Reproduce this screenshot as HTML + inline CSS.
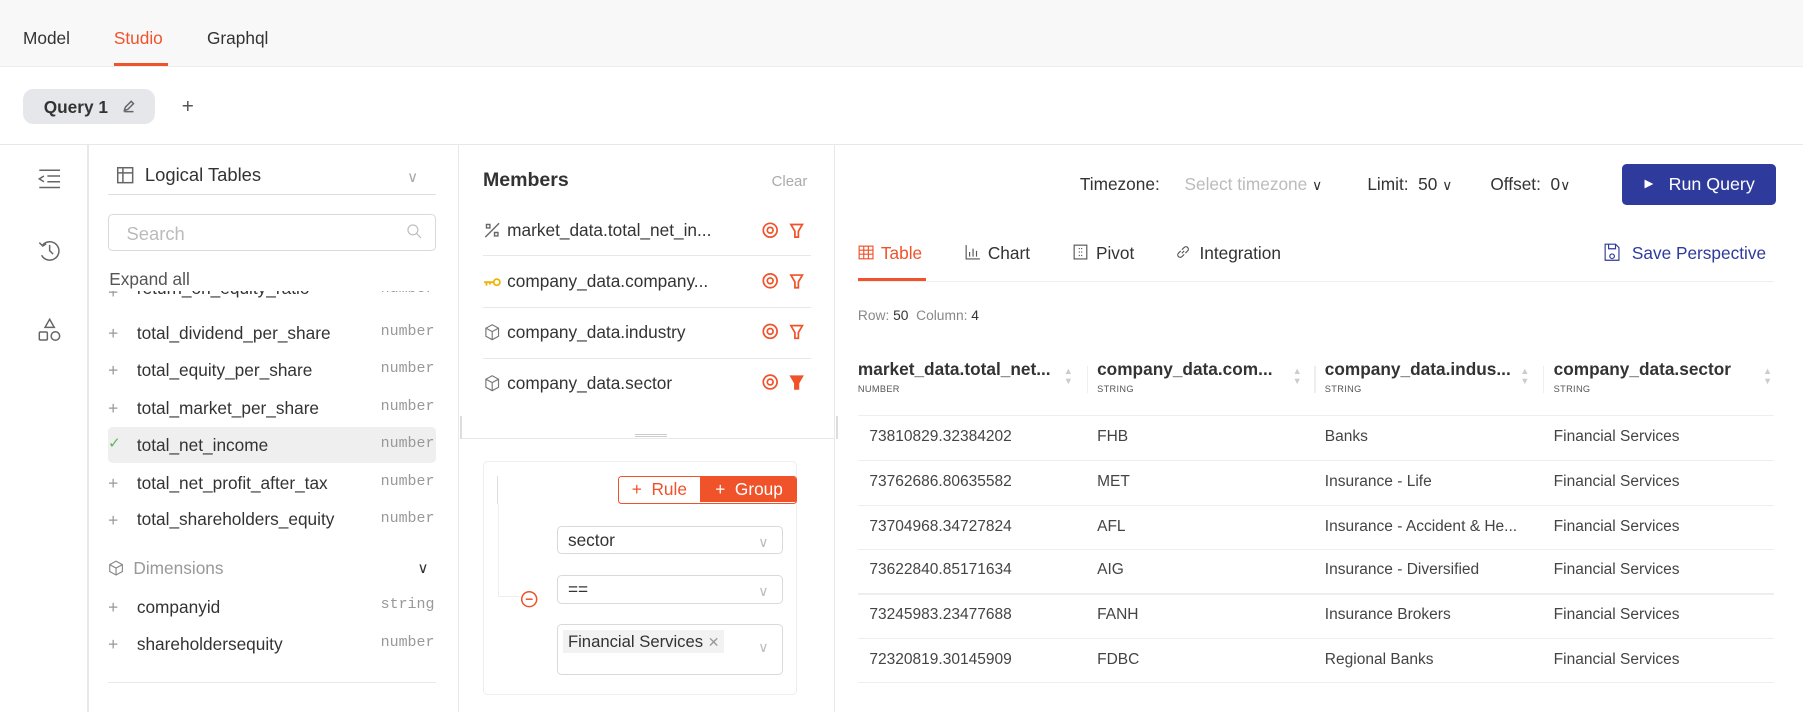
<!DOCTYPE html>
<html><head><meta charset="utf-8"><style>
*{box-sizing:border-box;margin:0;padding:0}
html,body{width:1803px;height:712px;overflow:hidden;background:#fff}
#w{zoom:1.15;width:1568px;height:620px;position:relative;font-family:"Liberation Sans",sans-serif;color:#333;font-size:15px}
.a{position:absolute;white-space:nowrap}
.ln{position:absolute;background:#e8e8e8}
.mono{font-family:"Liberation Mono",monospace;font-size:13px;color:#999}
.ic{stroke:#666;fill:none;stroke-width:1.3}
.sel{position:absolute;border:1px solid #d9d9d9;border-radius:4px;background:#fff}
.chev{position:absolute;right:12px;top:7px;color:#bbb;font-size:12px}
.th{font-weight:bold;font-size:15px;color:#333}
.st{font-size:8px;color:#555;letter-spacing:.3px}
.td{font-size:13.5px;color:#444}
.pl{position:absolute;color:#999;font-size:15px;line-height:1}
</style></head><body><div id="w">
<div class="a" style="left:0;top:0;width:1568px;height:58px;background:#f8f8f9;border-bottom:1px solid #ececec"></div>
<div class="a" style="left:20px;top:24px">Model</div>
<div class="a" style="left:99px;top:24px;color:#f0522a">Studio</div>
<div class="a" style="left:99px;top:55px;width:47px;height:2px;background:#f0522a"></div>
<div class="a" style="left:180px;top:24px">Graphql</div>
<div class="a" style="left:20px;top:77px;width:115px;height:31px;background:#e5e7eb;border-radius:9px"></div>
<div class="a" style="left:38px;top:84px;font-weight:bold;color:#333">Query 1</div>
<svg class="a" style="left:106px;top:86px" width="12" height="12"><path d="M2 10l1-3 5-5 2 2-5 5z M2 11h8" class="ic" stroke-width="1"/></svg>
<div class="a" style="left:158px;top:83px;font-size:18px;color:#555">+</div>
<div class="ln" style="left:0;top:125px;width:1568px;height:1px"></div>
<div class="ln" style="left:76px;top:126px;width:1px;height:494px"></div>
<svg class="a" style="left:32px;top:146px" width="22" height="20"><path d="M2 2h18M9 7h11M9 12h11M2 17h18M6 7l-4 2.5 4 2.5" class="ic"/></svg>
<svg class="a" style="left:32px;top:207px" width="22" height="22"><path d="M5 6a8 8 0 1 1 -1 9M2 4l3 3 3-2M11 6v5l3 3" class="ic"/></svg>
<svg class="a" style="left:32px;top:276px" width="22" height="22"><path d="M11 2l4 7h-8z" class="ic"/><rect x="2" y="13" width="7" height="7" rx="1" class="ic"/><circle cx="16" cy="16.5" r="3.7" class="ic"/></svg>
<svg class="a" style="left:101px;top:144px" width="16" height="16"><rect x="1.5" y="1.5" width="13" height="13" class="ic"/><path d="M1.5 6h13M6 1.5v13" class="ic"/></svg>
<div class="a" style="left:126px;top:143px;font-size:16px">Logical Tables</div>
<div class="a" style="left:354px;top:146px;color:#aaa;font-size:13px">∨</div>
<div class="ln" style="left:94px;top:169px;width:285px;height:1px;background:#ddd"></div>
<div class="a" style="left:94px;top:186px;width:285px;height:32px;border:1px solid #d9d9d9;border-radius:4px"></div>
<div class="a" style="left:110px;top:194px;color:#bbb;font-size:16px">Search</div>
<svg class="a" style="left:353px;top:194px" width="14" height="14"><circle cx="6" cy="6" r="4.3" stroke="#bbb" fill="none"/><path d="M9 9l4 4" stroke="#bbb"/></svg>
<div class="a" style="left:95px;top:234px;color:#555">Expand all</div>
<div style="position:absolute;left:94px;top:253px;width:285px;height:12px;overflow:hidden">
<div class="pl" style="left:0;top:-6px">+</div><div class="a" style="left:25px;top:-11px">return_on_equity_ratio</div><div class="a mono" style="left:237px;top:-9px">number</div></div>
<div class="a" style="left:94px;top:371px;width:285px;height:32px;background:#efefef;border-radius:4px"></div>
<div class="pl" style="left:94px;top:283px">+</div>
<div class="pl" style="left:94px;top:315px">+</div>
<div class="pl" style="left:94px;top:348px">+</div>
<div class="a" style="left:94px;top:380px;color:#5cb85c;font-size:13px;line-height:1">✓</div>
<div class="pl" style="left:94px;top:413px">+</div>
<div class="pl" style="left:94px;top:445px">+</div>
<div class="a" style="left:119px;top:281px">total_dividend_per_share</div>
<div class="a" style="left:119px;top:313px">total_equity_per_share</div>
<div class="a" style="left:119px;top:346px">total_market_per_share</div>
<div class="a" style="left:119px;top:378px">total_net_income</div>
<div class="a" style="left:119px;top:411px">total_net_profit_after_tax</div>
<div class="a" style="left:119px;top:443px">total_shareholders_equity</div>
<div class="a mono" style="left:331px;top:282px">number</div>
<div class="a mono" style="left:331px;top:314px">number</div>
<div class="a mono" style="left:331px;top:347px">number</div>
<div class="a mono" style="left:331px;top:379px">number</div>
<div class="a mono" style="left:331px;top:412px">number</div>
<div class="a mono" style="left:331px;top:444px">number</div>
<svg class="a" style="left:94px;top:487px" width="14" height="14"><path d="M7 1l5.5 3v6L7 13 1.5 10V4z M1.5 4L7 7l5.5-3M7 7v6" stroke="#888" fill="none"/></svg>
<div class="a" style="left:116px;top:485px;color:#999">Dimensions</div>
<div class="a" style="left:363px;top:486px;font-size:13px;color:#333">∨</div>
<div class="pl" style="left:94px;top:521px">+</div>
<div class="pl" style="left:94px;top:553px">+</div>
<div class="a" style="left:119px;top:519px">companyid</div>
<div class="a" style="left:119px;top:551px">shareholdersequity</div>
<div class="a mono" style="left:331px;top:519px">string</div>
<div class="a mono" style="left:331px;top:552px">number</div>
<div class="ln" style="left:94px;top:593px;width:285px;height:1px"></div>
<div class="ln" style="left:398px;top:126px;width:1px;height:494px"></div>
<div class="a" style="left:420px;top:147px;font-size:17px;font-weight:bold;color:#333">Members</div>
<div class="a" style="left:671px;top:150px;font-size:13px;color:#aaa">Clear</div>
<svg class="a" style="left:420px;top:192px" width="16" height="16"><path d="M2 14L14 2M3 3h3v3H3zM10 10h3v3h-3z" stroke="#666" fill="none" stroke-width="1.2"/></svg>
<svg class="a" style="left:420px;top:237px" width="16" height="16"><path d="M1 8h8M3 8v3M6 8v2" stroke="#f0b400" stroke-width="1.6" fill="none"/><circle cx="12" cy="8" r="2.7" stroke="#f0b400" stroke-width="1.5" fill="none"/></svg>
<svg class="a" style="left:420px;top:281px" width="16" height="16"><path d="M8 1.5l5.5 3v7L8 14.5 2.5 11.5v-7z M2.5 4.5L8 7.5l5.5-3M8 7.5v7" stroke="#777" fill="none"/></svg>
<svg class="a" style="left:420px;top:325px" width="16" height="16"><path d="M8 1.5l5.5 3v7L8 14.5 2.5 11.5v-7z M2.5 4.5L8 7.5l5.5-3M8 7.5v7" stroke="#777" fill="none"/></svg>
<div class="a" style="left:441px;top:191px">market_data.total_net_in...</div>
<div class="a" style="left:441px;top:236px">company_data.company...</div>
<div class="a" style="left:441px;top:280px">company_data.industry</div>
<div class="a" style="left:441px;top:324px">company_data.sector</div>
<div class="ln" style="left:420px;top:222px;width:285px;height:1px"></div>
<div class="ln" style="left:420px;top:267px;width:285px;height:1px"></div>
<div class="ln" style="left:420px;top:311px;width:285px;height:1px"></div>
<svg class="a" style="left:662px;top:192px" width="45" height="160">
<g stroke="#f0522a" fill="none" stroke-width="1.5">
<circle cx="8" cy="8" r="6"/><circle cx="8" cy="8" r="2.5"/>
<circle cx="8" cy="52" r="6"/><circle cx="8" cy="52" r="2.5"/>
<circle cx="8" cy="96" r="6"/><circle cx="8" cy="96" r="2.5"/>
<circle cx="8" cy="140" r="6"/><circle cx="8" cy="140" r="2.5"/>
<path d="M26 3h10l-3.5 6v5h-3V9z"/><path d="M26 47h10l-3.5 6v5h-3V53z"/><path d="M26 91h10l-3.5 6v5h-3V97z"/>
<path d="M26 135h10l-3.5 6v5h-3v-5z" fill="#f0522a"/></g></svg>
<div class="a" style="left:400px;top:362px;width:2px;height:20px;background:#ddd"></div>
<div class="a" style="left:727px;top:362px;width:2px;height:20px;background:#ddd"></div>
<div class="ln" style="left:402px;top:381px;width:323px;height:1px"></div>
<div class="a" style="left:552px;top:377px;width:28px;height:3px;border-top:1px solid #ccc;border-bottom:1px solid #ccc"></div>
<div class="a" style="left:420px;top:401px;width:273px;height:203px;border:1px solid #eee;border-radius:4px"></div>
<div class="a" style="left:432px;top:414px;width:1px;height:24px;background:#ddd"></div>
<div class="a" style="left:433px;top:438px;width:1px;height:80px;background:#eee"></div>
<div class="a" style="left:433px;top:518px;width:18px;height:1px;background:#eee"></div>
<div class="a" style="left:537px;top:414px;width:156px;height:24px;border:1px solid #f0522a;border-radius:3px;overflow:hidden">
<div class="a" style="left:0;top:0;width:71px;height:22px;background:#fff;color:#f0522a;text-align:center;line-height:22px">+&nbsp; Rule</div>
<div class="a" style="left:71px;top:0;width:85px;height:22px;background:#f0522a;color:#fff;text-align:center;line-height:22px">+&nbsp; Group</div></div>
<div class="sel" style="left:484px;top:457px;width:197px;height:25px"><div class="a" style="left:9px;top:3px">sector</div><div class="chev">∨</div></div>
<div class="sel" style="left:484px;top:500px;width:197px;height:25px"><div class="a" style="left:9px;top:3px">==</div><div class="chev">∨</div></div>
<div class="sel" style="left:484px;top:543px;width:197px;height:44px"><div class="a" style="left:5px;top:4px;height:20px;background:#f2f2f2;padding:0 4px;line-height:20px;font-size:14.5px">Financial Services <span style="color:#999;font-size:12px">✕</span></div><div class="chev" style="top:13px">∨</div></div>
<svg class="a" style="left:452px;top:513px" width="16" height="16"><circle cx="8" cy="8" r="6.5" stroke="#f0522a" fill="none" stroke-width="1.3"/><path d="M5 8h6" stroke="#f0522a" stroke-width="1.3"/></svg>
<div class="ln" style="left:725px;top:126px;width:1px;height:494px"></div>
<div class="a" style="left:939px;top:151px">Timezone:</div>
<div class="a" style="left:1030px;top:151px;color:#bbb">Select timezone <span style="color:#333;font-size:12px">∨</span></div>
<div class="a" style="left:1189px;top:151px">Limit:&nbsp; 50 <span style="font-size:12px">∨</span></div>
<div class="a" style="left:1296px;top:151px">Offset:&nbsp; 0<span style="font-size:12px">∨</span></div>
<div class="a" style="left:1410px;top:143px;width:134px;height:35px;background:#2e3a9c;border-radius:4px;color:#fff;line-height:35px;font-size:15.5px"><span style="position:absolute;left:20px;font-size:10px">▶</span><span style="position:absolute;left:41px">Run Query</span></div>
<svg class="a" style="left:746px;top:213px" width="14" height="13"><rect x="1" y="1" width="12" height="11" stroke="#f0522a" fill="none"/><path d="M1 4.5h12M1 8h12M5 1v11M9 1v11" stroke="#f0522a"/></svg>
<div class="a" style="left:766px;top:211px;color:#f0522a">Table</div>
<div class="a" style="left:746px;top:242px;width:59px;height:2px;background:#f0522a"></div>
<svg class="a" style="left:839px;top:212px" width="14" height="14"><path d="M1 1v12h12M4 11V7M7 11V4M10 11V6" stroke="#555" fill="none"/></svg>
<div class="a" style="left:859px;top:211px">Chart</div>
<svg class="a" style="left:933px;top:212px" width="13" height="14"><rect x="1" y="1" width="11" height="12" stroke="#555" fill="none"/><path d="M5 4h1M7 4h1M5 7h1M7 7h1M5 10h1M7 10h1" stroke="#555"/></svg>
<div class="a" style="left:953px;top:211px">Pivot</div>
<svg class="a" style="left:1022px;top:212px" width="14" height="14"><path d="M6 8l2-2M5 6l-2 2a2 2 0 0 0 3 3l2-2M9 8l2-2a2 2 0 0 0-3-3L6 5" stroke="#555" fill="none"/></svg>
<div class="a" style="left:1043px;top:211px">Integration</div>
<svg class="a" style="left:1395px;top:211px" width="14" height="16"><path d="M1 1h9l3 3v11H1z M4 1v4h6V1 M7 9.5a2 2 0 1 0 .1 0" stroke="#2e3a9c" fill="none"/></svg>
<div class="a" style="left:1419px;top:211px;color:#2e3a9c">Save Perspective</div>
<div class="ln" style="left:746px;top:244px;width:797px;height:1px;background:#eee"></div>
<div class="a" style="left:746px;top:268px;font-size:12px;color:#888">Row: <span style="color:#333">50</span>&nbsp; Column: <span style="color:#333">4</span></div>
<div class="a th" style="left:746px;top:312px">market_data.total_net...</div>
<div class="a th" style="left:954px;top:312px">company_data.com...</div>
<div class="a th" style="left:1152px;top:312px">company_data.indus...</div>
<div class="a th" style="left:1351px;top:312px">company_data.sector</div>
<div class="a st" style="left:746px;top:334px">NUMBER</div>
<div class="a st" style="left:954px;top:334px">STRING</div>
<div class="a st" style="left:1152px;top:334px">STRING</div>
<div class="a st" style="left:1351px;top:334px">STRING</div>
<div class="a" style="left:925px;top:318px;color:#ccc;font-size:8px;line-height:9px">▲<br>▼</div>
<div class="a" style="left:1124px;top:318px;color:#ccc;font-size:8px;line-height:9px">▲<br>▼</div>
<div class="a" style="left:1322px;top:318px;color:#ccc;font-size:8px;line-height:9px">▲<br>▼</div>
<div class="a" style="left:1533px;top:318px;color:#ccc;font-size:8px;line-height:9px">▲<br>▼</div>
<div class="ln" style="left:945px;top:318px;width:1px;height:24px;background:#eee"></div>
<div class="ln" style="left:1143px;top:318px;width:1px;height:24px;background:#eee"></div>
<div class="ln" style="left:1342px;top:318px;width:1px;height:24px;background:#eee"></div>
<div class="ln" style="left:746px;top:361px;width:797px;height:1px;background:#eee"></div>
<div class="ln" style="left:746px;top:400px;width:797px;height:1px;background:#eee"></div>
<div class="ln" style="left:746px;top:439px;width:797px;height:1px;background:#eee"></div>
<div class="ln" style="left:746px;top:477px;width:797px;height:1px;background:#eee"></div>
<div class="ln" style="left:746px;top:516px;width:797px;height:1px;background:#eee"></div>
<div class="ln" style="left:746px;top:555px;width:797px;height:1px;background:#eee"></div>
<div class="ln" style="left:746px;top:593px;width:797px;height:1px;background:#eee"></div>
<div class="a td" style="left:756px;top:372px">73810829.32384202</div><div class="a td" style="left:954px;top:372px">FHB</div><div class="a td" style="left:1152px;top:372px">Banks</div><div class="a td" style="left:1351px;top:372px">Financial Services</div>
<div class="a td" style="left:756px;top:411px">73762686.80635582</div><div class="a td" style="left:954px;top:411px">MET</div><div class="a td" style="left:1152px;top:411px">Insurance - Life</div><div class="a td" style="left:1351px;top:411px">Financial Services</div>
<div class="a td" style="left:756px;top:450px">73704968.34727824</div><div class="a td" style="left:954px;top:450px">AFL</div><div class="a td" style="left:1152px;top:450px">Insurance - Accident &amp; He...</div><div class="a td" style="left:1351px;top:450px">Financial Services</div>
<div class="a td" style="left:756px;top:488px">73622840.85171634</div><div class="a td" style="left:954px;top:488px">AIG</div><div class="a td" style="left:1152px;top:488px">Insurance - Diversified</div><div class="a td" style="left:1351px;top:488px">Financial Services</div>
<div class="a td" style="left:756px;top:527px">73245983.23477688</div><div class="a td" style="left:954px;top:527px">FANH</div><div class="a td" style="left:1152px;top:527px">Insurance Brokers</div><div class="a td" style="left:1351px;top:527px">Financial Services</div>
<div class="a td" style="left:756px;top:566px">72320819.30145909</div><div class="a td" style="left:954px;top:566px">FDBC</div><div class="a td" style="left:1152px;top:566px">Regional Banks</div><div class="a td" style="left:1351px;top:566px">Financial Services</div>
</div></body></html>
